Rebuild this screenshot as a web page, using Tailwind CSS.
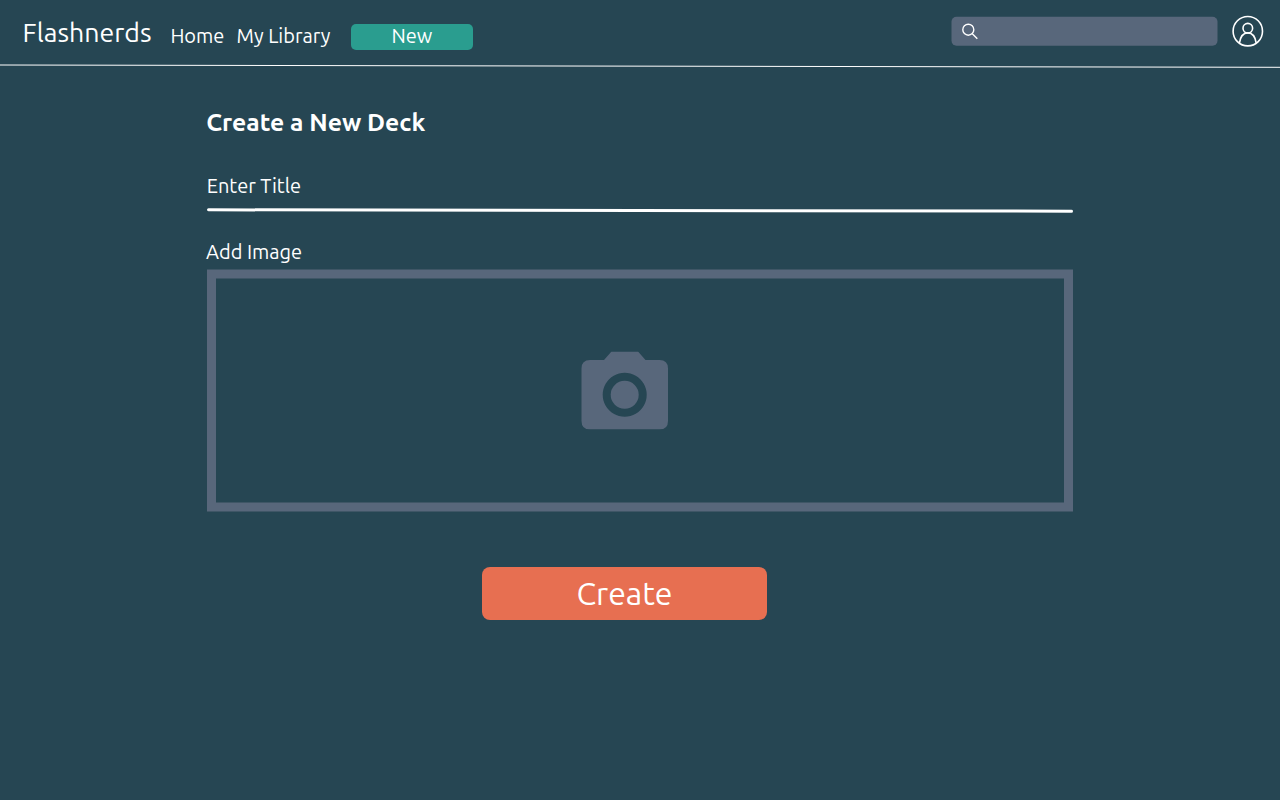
<!DOCTYPE html>
<html lang="en">
<head>
<meta charset="utf-8">
<title>Flashnerds</title>
<script src="https://cdn.jsdelivr.net/npm/@tailwindcss/browser@4"></script>
</head>
<body class="h-screen overflow-hidden bg-[#264653] font-['Ubuntu','Noto_Sans',sans-serif] text-white">
<header class="flex h-16 items-start whitespace-nowrap">
  <a class="ml-[22.600px] mt-[14px] w-[145.800px] text-[26.7px] leading-9">Flashnerds</a>
  <nav class="mt-[22px] flex text-[20px] leading-7">
    <a class="ml-[2px] w-[66.200px]">Home</a>
    <a class="w-[114.400px]">My Library</a>
  </nav>
  <button class="mt-6 h-[26px] w-[122px] rounded-[5px] bg-[#2a9d8f] pb-[2px] text-[20px] leading-6">New</button>
  <div class="ml-auto mt-[17px] flex h-[29px] w-[266px] -translate-x-[0.5px] -translate-y-[0.3px] items-center rounded-[5px] bg-[#58677b] pl-[10px]">
    <svg class="size-[18px]" viewBox="0 0 18 18" fill="none" stroke="white" stroke-width="1.4"><circle cx="6.800" cy="7" r="5.5"/><path d="M10.800 11.1l5 4.900"/></svg>
  </div>
  <svg class="ml-[14px] mr-4 mt-[15px] size-8" viewBox="0 0 32 32" fill="none" stroke="white" stroke-width="1.6"><circle cx="15.800" cy="16.2" r="14.700"/><circle cx="15.800" cy="13.2" r="4.800"/><path d="M7.400 28.200C8.300 22 11 17.900 15.800 17.900s7.500 4.100 8.400 10.300"/></svg>
</header>
<svg class="block h-1 w-full" viewBox="0 0 1280 4"><path d="M0 1L1280 3.300" stroke="white" stroke-width="1"/></svg>
<main class="ml-[207px] flex w-[866px] flex-col">
  <h1 class="-ml-[0.7px] mt-[38px] text-[24.700px] font-bold leading-8">Create a New Deck</h1>
  <label class="mt-[34px] -ml-[0.3px] text-[20px] leading-7">Enter Title</label>
  <svg class="mt-2 block h-[5px] w-full" viewBox="0 0 866 5"><path d="M1.500 1.800L864.500 3.200" stroke="white" stroke-width="3" stroke-linecap="round"/></svg>
  <label class="mt-[25px] -ml-px text-[20px] leading-7">Add Image</label>
  <div class="mt-[3px] flex h-[242px] translate-y-[0.5px] items-start justify-center border-[9px] border-[#58677b] pr-[32px] pt-[73px]">
    <svg class="h-[78px] w-[87px]" viewBox="0 0 87 78" fill="#58677b"><path fill-rule="evenodd" d="M30.500 0H57L64.500 8.500H78.500Q87 8.500 87 17V69.500Q87 78 78.500 78H9Q.5 78 .5 69.500V17Q.5 8.500 9 8.500H23ZM43.700 21.300a22 22 0 1 0 .01 0Z"/><circle cx="43.700" cy="43.300" r="14"/></svg>
  </div>
  <button class="ml-[275px] mt-[56px] h-[53px] w-[285px] rounded-lg bg-[#e76f51] text-[32px] leading-[53px]">Create</button>
</main>
</body>
</html>
